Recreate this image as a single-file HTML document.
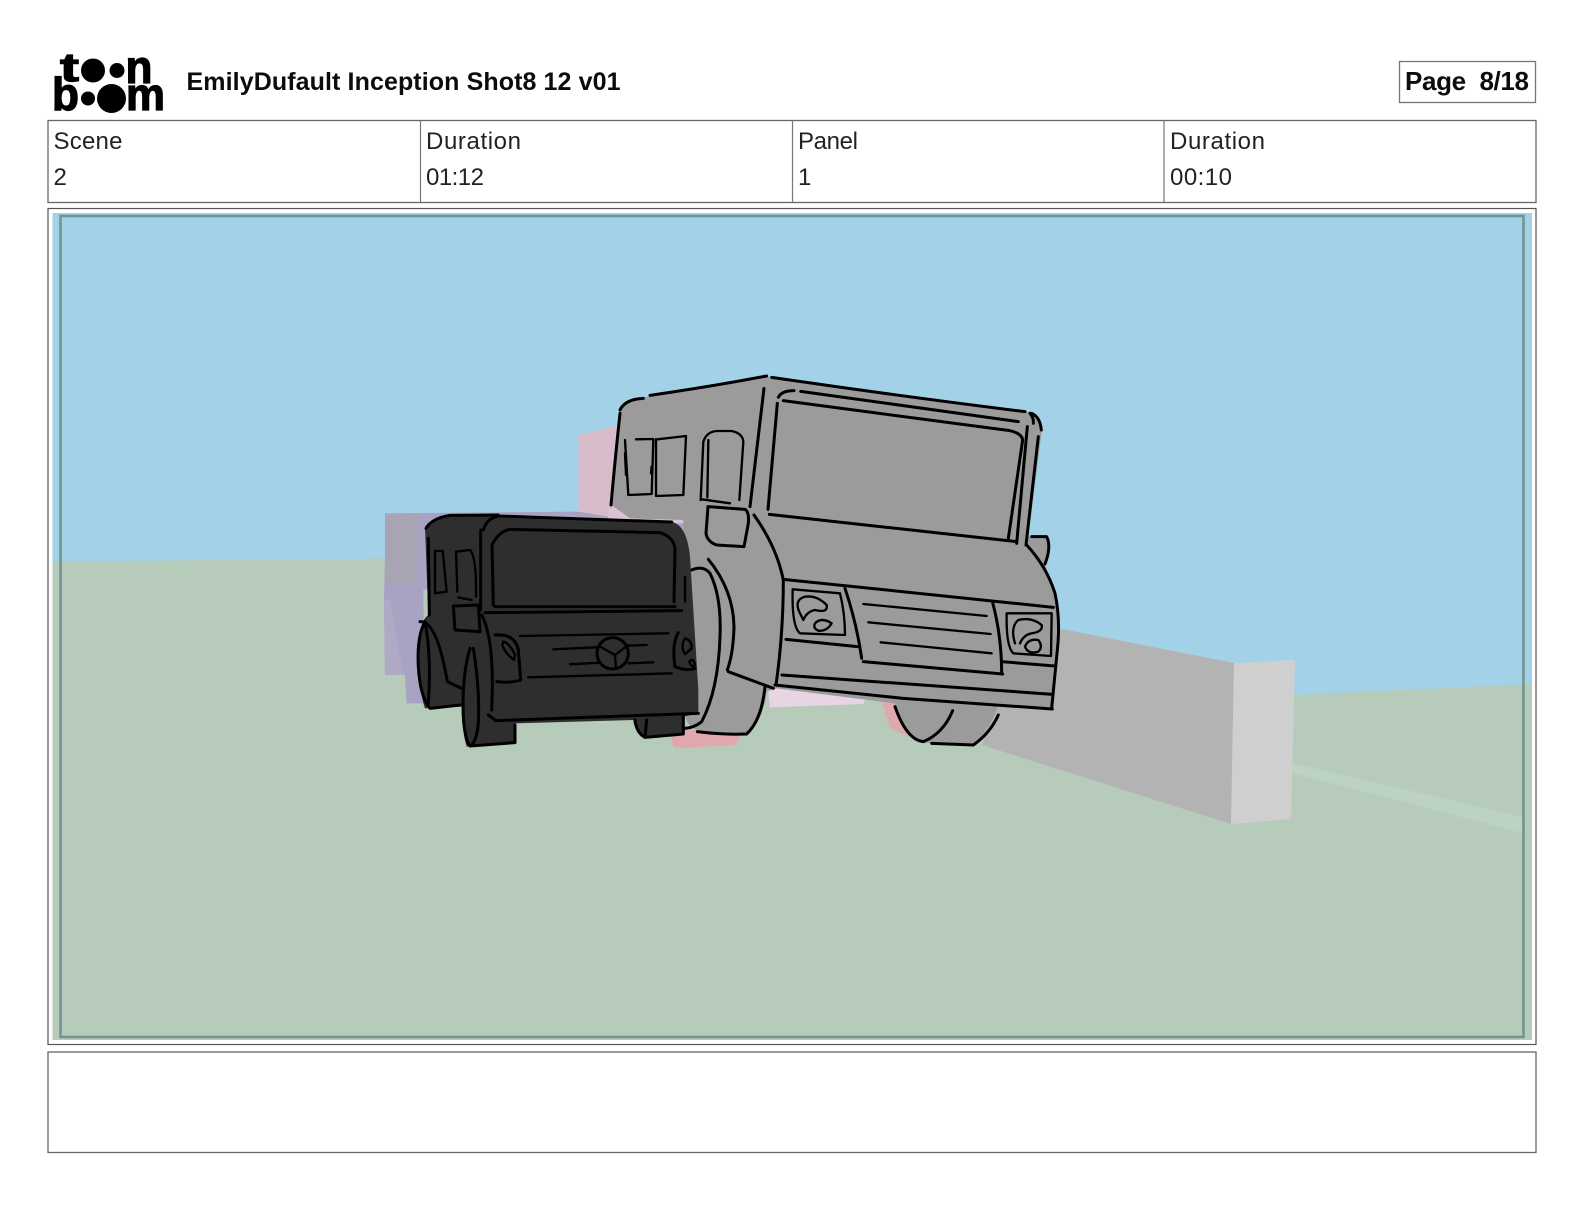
<!DOCTYPE html>
<html lang="en"><head><meta charset="utf-8"><title>EmilyDufault Inception Shot8 12 v01 - Page 8/18</title>
<style>
html,body{margin:0;padding:0;background:#fff;width:1584px;height:1224px;overflow:hidden}
svg{display:block}
text{font-family:"Liberation Sans",sans-serif;fill:#111}
.l{font-size:24px;fill:#222}
.b{font-weight:700;fill:#0c0c0c}
.k{fill:#000;stroke:#000;stroke-width:1.2px;font-weight:700}
.s{fill:none;stroke:#000;stroke-width:9;stroke-linecap:round;stroke-linejoin:round}
.t{stroke-width:7}
.art{filter:blur(.35px)}
</style></head><body>
<svg width="1584" height="1224" viewBox="0 0 1584 1224" xmlns="http://www.w3.org/2000/svg">
<rect width="1584" height="1224" fill="#fff"/>
<!-- logo -->
<g>
<text x="60" y="81" class="k" font-size="40" textLength="19" lengthAdjust="spacingAndGlyphs">t</text>
<circle cx="93" cy="70.500" r="12" fill="#000"/><circle cx="117" cy="70.500" r="7.500" fill="#000"/>
<text x="125.500" y="83" class="k" font-size="46" textLength="27" lengthAdjust="spacingAndGlyphs">n</text>
<text x="52" y="110" class="k" font-size="46" textLength="27" lengthAdjust="spacingAndGlyphs">b</text>
<circle cx="88" cy="98.500" r="7" fill="#000"/><circle cx="111.500" cy="98.500" r="14.500" fill="#000"/>
<text x="126" y="110" class="k" font-size="45" textLength="39" lengthAdjust="spacingAndGlyphs">m</text>
</g>
<text x="186.500" y="90" class="b" font-size="25" textLength="434" lengthAdjust="spacing">EmilyDufault Inception Shot8 12 v01</text>
<rect x="1399.500" y="61.500" width="136" height="41" fill="#fff" stroke="#777" stroke-width="1.300"/>
<text x="1405" y="90" class="b" font-size="26" textLength="124" lengthAdjust="spacing" xml:space="preserve">Page  8/18</text>
<!-- info table -->
<rect x="48" y="120.500" width="1488" height="82" fill="#fff" stroke="#666" stroke-width="1.300"/>
<path d="M420.500 120v82M792.500 120v82M1164 120v82" stroke="#777" stroke-width="1.200"/>
<text x="53.500" y="149" class="l" textLength="69" lengthAdjust="spacing">Scene</text>
<text x="53.500" y="185" class="l">2</text>
<text x="426" y="149" class="l" textLength="95" lengthAdjust="spacing">Duration</text>
<text x="426" y="185" class="l" textLength="58" lengthAdjust="spacing">01:12</text>
<text x="798" y="149" class="l" textLength="60" lengthAdjust="spacing">Panel</text>
<text x="798" y="185" class="l">1</text>
<text x="1170" y="149" class="l" textLength="95" lengthAdjust="spacing">Duration</text>
<text x="1170" y="185" class="l" textLength="62" lengthAdjust="spacing">00:10</text>
<!-- picture frame -->
<rect x="48" y="208.500" width="1488" height="836" fill="#fff" stroke="#555" stroke-width="1.200"/>
<g class="art">
<rect x="52.500" y="213" width="1479.500" height="827" fill="#a3d1e8"/>
<path d="M52.500 561.500 L384 558.500 L1293 695 L1532 684 V1040 H52.500Z" fill="#b6cbba"/>
<path d="M1292 763 L1523 817 V833 L1292 773Z" fill="#bcd3c1"/>
<path d="M1062 629 L1234 663 L1231 824 L982 745 L1000 690Z" fill="#b3b3b3"/>
<path d="M1234 663 L1295 660 L1291 819 L1231 824Z" fill="#cfcfcf"/>
<g transform="translate(370 490) scale(.33333)">
<path d="M45 70 L620 65 L960 70 L960 200 L160 300 L165 640 L110 640 L105 555 L45 555 L42 330 L45 205Z" fill="#a9a3c3"/>
<path d="M45 70 L140 70 L140 280 L45 280Z" fill="#a8a4b4"/>
<path d="M42 330 L60 330 L100 555 L45 555Z" fill="#aeaac6"/>
</g>
<g transform="translate(570 360) scale(.33333)">
<path d="M25 225 L140 198 L180 480 L115 470 L25 455Z" fill="#d9bccb"/>
<path d="M115 445 L340 445 L340 490 L115 490Z" fill="#d9c3d6"/>
<path d="M590 950 L900 980 L880 1032 L600 1042Z" fill="#e8d5e3"/>
<path d="M930 1010 L985 1010 L1015 1130 L960 1105Z" fill="#dfa9ad"/>
<path d="M300 1110 L520 1110 L497 1155 L345 1163 L310 1162Z" fill="#e0a8ad"/>
<path d="M370 900 L395 900 L395 1060 L370 1060Z" fill="#e0b8c0"/>
</g>
<!-- big truck -->
<g transform="translate(570 360) scale(.33333)">
<path d="M150 150 Q170 115 220 112 L590 50 L1370 155 Q1412 170 1415 215 L1375 530 L1430 530 Q1445 560 1425 615 L1450 680 Q1475 750 1465 860 L1447 1045 L1285 1035 Q1260 1110 1210 1155 L1060 1148 Q1005 1130 975 1030 L620 985 L590 995 Q580 1080 535 1120 L400 1115 Q350 1110 340 1050 L340 480 L180 475 L125 435Z" fill="#9b9b9b"/>
<g class="s">
<path d="M150 150 Q165 118 220 115M240 106 Q420 80 590 48M605 52 Q1000 110 1365 155M1385 160 Q1410 170 1414 210"/>
<path d="M150 160 Q135 300 123 435M1405 230 Q1385 400 1368 555"/>
<path d="M582 85 L540 440M622 130 L594 448M625 112 Q635 92 672 92M692 94 L1345 185M640 122 L1320 212 Q1355 220 1358 240 L1315 535M1372 200 L1340 550M1380 160 Q1392 175 1390 190"/>
<path class="t" d="M165 240 L175 405 L245 402 L250 237 L198 238M165 280 L168 345M258 238 L258 408 L340 405 L348 228 L262 238M245 320 L243 340"/>
<path class="t" d="M392 420 L400 245 Q410 215 440 213 L485 213 Q518 220 520 245 L508 420M415 240 L412 412M395 418 L480 430"/>
<path d="M414 440 L525 448 Q538 455 535 490 L522 560 L440 555 Q412 545 408 520Z"/>
<path d="M598 463 L1340 545"/>
<path d="M552 465 Q620 560 640 660 Q640 820 618 975M475 935 L610 985"/>
<path d="M1370 555 Q1430 620 1455 700 Q1472 780 1462 870 L1445 1045"/>
<path d="M640 658 L1450 742M825 685 Q860 790 875 895M1268 728 Q1295 830 1295 940"/>
<path d="M648 838 L862 860M880 905 L1298 942M1295 905 L1455 918"/>
<path class="t" d="M880 732 L1250 768M895 787 L1262 822M932 847 L1265 880"/>
<path d="M636 945 L1448 1003M615 975 L1000 1015 L1447 1047"/>
<path class="t" d="M668 688 L810 700 Q825 760 825 825 L690 820 Q665 800 668 688Z"/>
<path class="t" d="M690 760 Q670 720 705 710 Q740 705 770 735 Q775 760 735 750 Q710 755 700 780ZM735 790 Q755 770 785 790 Q770 815 745 812 Q728 805 735 790Z"/>
<path class="t" d="M1310 760 L1445 760 L1443 888 L1330 880 Q1308 860 1310 760Z"/>
<path class="t" d="M1335 850 Q1320 800 1345 780 Q1385 770 1415 795 Q1420 815 1385 820 Q1360 825 1350 850M1365 860 Q1375 835 1405 840 Q1420 860 1405 875 Q1375 885 1365 860Z"/>
<path d="M415 598 Q490 690 492 800 Q490 880 472 930M365 630 Q400 615 420 640 Q455 710 450 830 Q445 990 395 1085 Q370 1105 340 1105M382 1115 Q460 1125 530 1122 Q575 1080 585 980"/>
<path d="M975 1040 Q1010 1140 1060 1145 Q1120 1120 1148 1052M1085 1150 L1210 1155 Q1260 1120 1285 1065"/>
<path d="M1385 530 L1430 530 Q1445 560 1425 612"/>
</g>
</g>
<!-- small truck -->
<g transform="translate(370 490) scale(.33333)">
<path d="M165 110 Q190 80 240 75 L375 75 L900 95 Q950 100 960 200 L985 600 L985 670 L940 680 L940 735 L830 740 Q790 720 790 690 L435 700 L435 760 L290 770 Q275 720 275 650 L165 655 Q145 600 145 470 Q150 390 175 375Z" fill="#2e2e2e"/>
<g class="s">
<path d="M168 115 Q185 85 240 76 L385 75M340 120 Q350 85 385 78 L905 96"/>
<path d="M175 145 L178 375M332 120 L332 360"/>
<path d="M370 345 L366 165 Q385 125 420 118 L870 128 Q910 140 915 175 L912 335M375 350 L915 350"/>
<path d="M345 368 L935 362"/>
<path class="t" d="M195 183 L218 183 L230 305 L195 310ZM262 305 L258 185 L300 180 Q320 200 318 320M265 322 L305 330"/>
<path d="M250 348 L325 345 L330 425 L255 420Z"/>
<path d="M335 375 Q375 450 365 660M355 675 L378 692 L985 670"/>
<path d="M150 395 Q200 390 232 575 L275 595"/>
<path d="M165 395 Q140 440 145 530 Q150 620 180 655 L270 645M165 395 Q185 500 175 640"/>
<path d="M300 475 Q275 560 280 680 Q285 750 300 768L435 758 L435 705M310 475 Q330 600 325 700 Q320 750 305 765"/>
<path d="M375 435 Q435 430 445 480 L452 570 Q420 580 380 575"/>
<path class="t" d="M400 455 Q420 460 435 495 L432 510 Q405 490 397 465Z"/>
<path class="t" d="M450 438 L895 430M475 562 L905 550"/>
<path class="t" d="M550 478 L680 472M600 523 L690 518M775 467 L830 465M775 520 L850 517"/>
<circle cx="728" cy="490" r="47"/>
<path class="t" d="M690 470 L735 495 L775 465M735 495 L738 535"/>
<path d="M925 428 Q905 460 915 530 Q950 545 975 535"/>
<path class="t" d="M945 445 Q965 450 965 475 L945 492 Q930 470 945 445ZM958 515 Q970 500 975 525 Q965 535 958 515Z"/>
<path d="M795 690 Q800 730 825 742 L940 732 L940 680M830 690 L825 742"/>
<path class="t" d="M945 260 L945 335"/>
</g>
</g>
<rect x="60.500" y="216" width="1463" height="821" fill="none" stroke="#6d8a85" stroke-width="2.600" opacity=".85"/>
</g>
<!-- notes -->
<rect x="48" y="1052" width="1488" height="100.500" fill="#fff" stroke="#666" stroke-width="1.300"/>
</svg>
</body></html>
